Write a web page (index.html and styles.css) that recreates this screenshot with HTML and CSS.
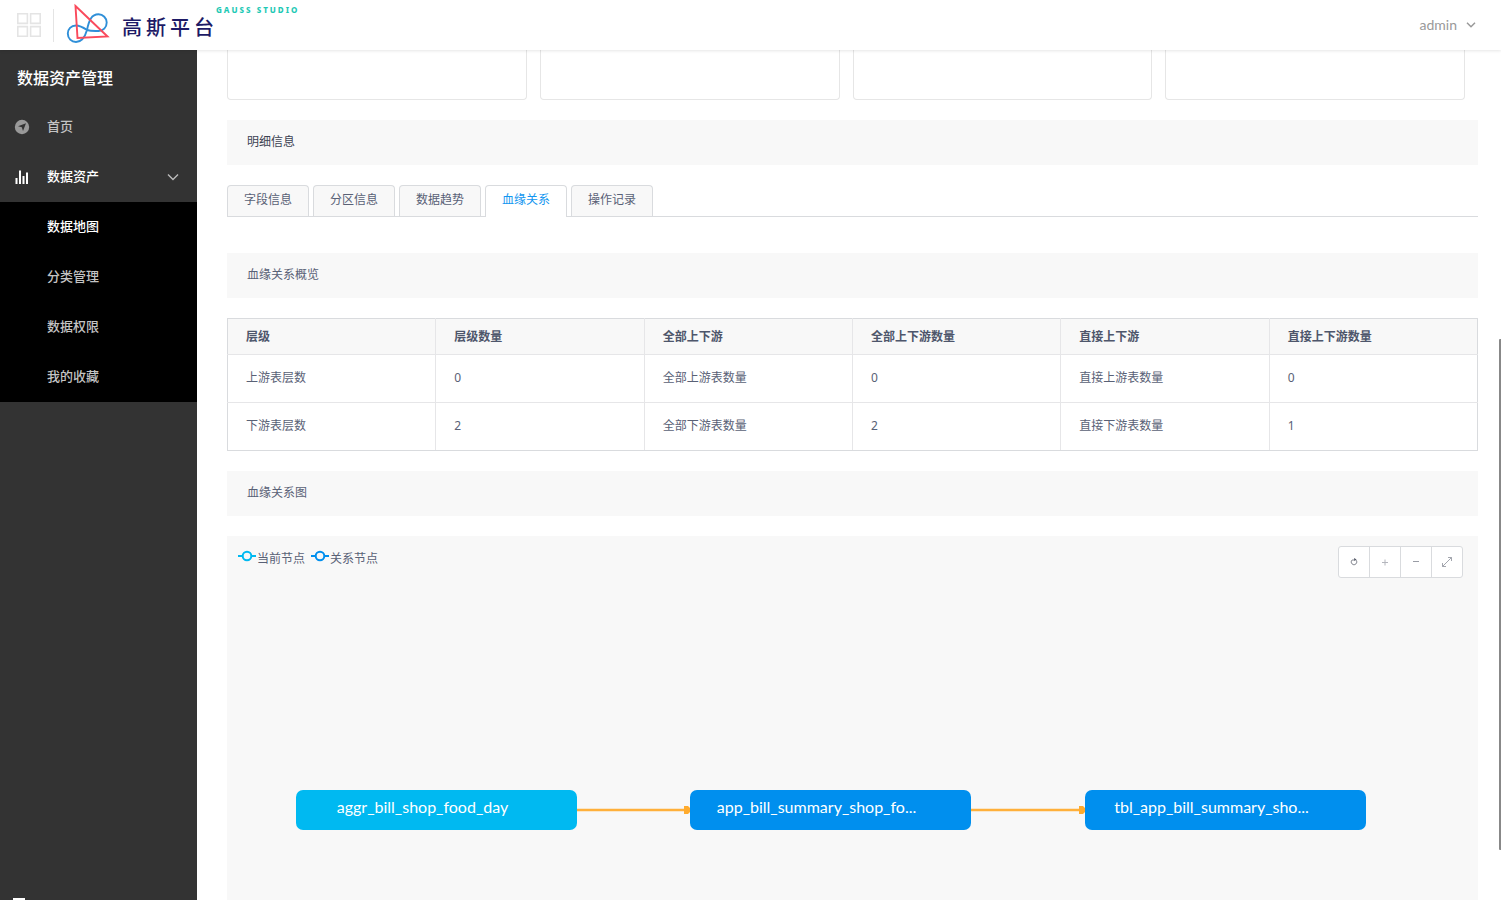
FILE: index.html
```html
<!DOCTYPE html>
<html lang="zh-CN">
<head>
<meta charset="utf-8">
<meta name="viewport" content="width=device-width, initial-scale=1">
<title>高斯平台</title>
<link rel="stylesheet" href="styles.css">
</head>
<body>
<div class="app">
  <header class="topbar">
    <button class="apps" type="button" aria-label="应用">
      <svg width="24" height="24" viewBox="0 0 24 24" fill="none" stroke="#e4e4e4" stroke-width="1.6"><path d="M.8.8h9.6v9.6H.8zM13.6.8h9.6v9.6h-9.6zM.8 13.6h9.6v9.6H.8zM13.6 13.6h9.6v9.6h-9.6z"/></svg>
    </button>
    <a class="brand" href="#">
      <svg class="brand-mark" width="44" height="42" viewBox="66 3 44 42" fill="none" stroke-width="1.9">
        <path d="M87 30C84 28 80 25.500 76 25.500C71 25.500 67.800 29 67.800 33.500C67.800 38.500 71.500 42 76 42C81.500 42 85 37 87 30C89 20 91.500 14.300 98.500 14.300C103 14.300 106.700 18 106.700 22.500C106.700 27.500 103 31 98.500 31C94 31 91 31.300 87 30z" stroke="#2f8fd8"/>
        <path d="M75.500 6L107.500 36.500L77.500 38z" stroke="#fa4a5c"/>
      </svg>
      <span class="brand-name">高斯平台</span>
      <span class="brand-sub">GAUSS STUDIO</span>
    </a>
    <button class="user" type="button">admin
      <svg width="10" height="6" viewBox="0 0 10 6" fill="none" stroke="#999" stroke-width="1.5"><path d="M1 .8l4 4 4-4"/></svg>
    </button>
  </header>
  <div class="body">
    <nav class="sidebar">
      <h1 class="side-title">数据资产管理</h1>
      <a class="side-item" href="#">
        <svg class="side-icon" width="16" height="16" viewBox="0 0 16 16"><circle cx="8" cy="8" r="7.200" fill="#999"/><path d="M12 4.200L9 12l-1.200-3.800L4 7.300z" fill="#333"/></svg>
        <span class="label">首页</span>
      </a>
      <a class="side-item open" href="#">
        <svg class="side-icon" width="16" height="16" viewBox="0 0 16 16" fill="#fff"><path d="M1.500 9h2v6h-2zM5 1.500h2V15H5zM8.500 7h2v8h-2zM12 3.500h2V15h-2z"/></svg>
        <span class="label">数据资产</span>
        <svg class="side-arrow" width="12" height="8" viewBox="0 0 12 8" fill="none" stroke="#bbb" stroke-width="1.400"><path d="M1 1.500l5 5 5-5"/></svg>
      </a>
      <div class="submenu">
        <a class="sub-item active" href="#">数据地图</a>
        <a class="sub-item" href="#">分类管理</a>
        <a class="sub-item" href="#">数据权限</a>
        <a class="sub-item" href="#">我的收藏</a>
      </div>
      <button class="collapse" type="button" aria-label="收起菜单"></button>
    </nav>
    <main class="content">
      <div class="cards"><div class="card"></div><div class="card"></div><div class="card"></div><div class="card"></div></div>
      <h2 class="bar dark">明细信息</h2>
      <div class="tabs" role="tablist">
        <button class="tab" role="tab" type="button">字段信息</button>
        <button class="tab" role="tab" type="button">分区信息</button>
        <button class="tab" role="tab" type="button">数据趋势</button>
        <button class="tab current" role="tab" type="button" aria-selected="true">血缘关系</button>
        <button class="tab" role="tab" type="button">操作记录</button>
      </div>
      <h3 class="bar">血缘关系概览</h3>
      <table class="summary">
        <thead><tr><th>层级</th><th>层级数量</th><th>全部上下游</th><th>全部上下游数量</th><th>直接上下游</th><th>直接上下游数量</th></tr></thead>
        <tbody>
          <tr><td>上游表层数</td><td>0</td><td>全部上游表数量</td><td>0</td><td>直接上游表数量</td><td>0</td></tr>
          <tr><td>下游表层数</td><td>2</td><td>全部下游表数量</td><td>2</td><td>直接下游表数量</td><td>1</td></tr>
        </tbody>
      </table>
      <h3 class="bar">血缘关系图</h3>
      <section class="graph">
        <div class="graph-head">
          <div class="legend">
            <span class="key"><svg width="18" height="12" viewBox="0 0 18 12" fill="none" stroke="#00b9f1" stroke-width="2"><path d="M0 6h4.500M13.500 6H18"/><circle cx="9" cy="6" r="4.300"/></svg>当前节点</span>
            <span class="key"><svg width="18" height="12" viewBox="0 0 18 12" fill="none" stroke="#008fee" stroke-width="2"><path d="M0 6h4.500M13.500 6H18"/><circle cx="9" cy="6" r="4.300"/></svg>关系节点</span>
          </div>
          <div class="tools">
            <button class="tool" type="button" aria-label="刷新"><svg width="12" height="12" viewBox="0 0 12 12" fill="none" stroke="#888b94"><path d="M4 4a2.800 2.800 0 1 0 4 0M4 4h2.500"/><path d="M6 2l2.600 1.600L6.300 5z" fill="#555a68" stroke="none"/></svg></button>
            <button class="tool" type="button" aria-label="放大"><svg width="12" height="12" viewBox="0 0 12 12" fill="none" stroke="#b4b6bd"><path d="M3 6.500h6M6 3.500v6"/></svg></button>
            <button class="tool" type="button" aria-label="缩小"><svg width="12" height="12" viewBox="0 0 12 12" fill="none" stroke="#999ca5"><path d="M3 5.500h6"/></svg></button>
            <button class="tool" type="button" aria-label="全屏"><svg width="12" height="12" viewBox="0 0 12 12" fill="none" stroke="#999ca5" stroke-width=".9"><path d="M1.500 10.500l9-9M7 1.500h3.500V5M1.500 7v3.500H5"/></svg></button>
          </div>
        </div>
        <svg class="edges" width="800" height="10" viewBox="0 0 800 10"><path d="M0 5h112M394 5h112" stroke="#ffb03b" stroke-width="2.500"/><path d="M107 1h4l4 4-4 4h-4zM502 1h4l4 4-4 4h-4z" fill="#ffab2e"/></svg>
        <div class="node node-a">aggr_bill_shop_food_day</div>
        <div class="node node-b">app_bill_summary_shop_fo...</div>
        <div class="node node-c">tbl_app_bill_summary_sho...</div>
      </section>
      <div class="scroll-thumb"></div>
    </main>
  </div>
</div>
</body>
</html>
```
FILE: styles.css
```css
* { box-sizing: border-box; }
body {
  margin: 0;
  font-family: "Noto Sans", "Noto Sans CJK SC", sans-serif;
  font-size: 12px;
  line-height: 18px;
  color: #596176;
}
button { font: inherit; color: inherit; background: none; border: 0; padding: 0; cursor: pointer; }
a { color: inherit; text-decoration: none; }
svg { flex: none; }
.app { display: flex; flex-direction: column; height: 100vh; overflow: hidden; }

.topbar {
  display: flex;
  align-items: center;
  flex: none;
  height: 50px;
  padding: 0 25px 0 17px;
  background: #fff;
  box-shadow: 0 1px 3px rgba(0, 0, 0, .1);
  z-index: 1;
}
.apps { display: flex; height: 33px; align-items: center; padding-right: 12px; border-right: 1px solid #e4e4e4; }
.brand { display: flex; align-self: stretch; padding-left: 12px; }
.brand-mark { margin-top: 3px; }
.brand-name {
  margin: 12px 0 0 12px;
  font-family: "Noto Sans CJK SC", sans-serif;
  font-size: 20px;
  line-height: 30px;
  font-weight: 500;
  letter-spacing: 4px;
  color: #1d1a66;
}
.brand-sub { margin-left: -2px; padding-top: 4px; font-family: "Noto Sans", sans-serif; font-size: 8px; line-height: 12px; font-weight: 800; letter-spacing: 2px; color: #1fc9b5; }
.user { display: flex; align-items: center; gap: 9px; margin-left: auto; padding-bottom: 1px; font-family: Lato, sans-serif; font-size: 14px; color: #999; }

.body { display: flex; flex: 1; min-height: 0; }
.sidebar { position: relative; flex: none; width: 197px; background: #333; color: #c4c4c4; font-size: 13px; font-weight: 500; }
.side-title { margin: 0; padding: 16px 17px 12px; font-size: 16px; line-height: 24px; font-weight: 500; color: #fff; }
.side-item { display: flex; align-items: center; height: 50px; padding: 0 18px 0 14px; }
.side-icon { margin-right: 17px; }
.label { padding-bottom: 2px; }
.open, .active { color: #fff; }
.side-arrow { margin-left: auto; }
.submenu { background: #000; }
.sub-item { display: flex; align-items: center; height: 50px; padding: 0 0 2px 47px; }
.collapse { position: absolute; left: 13px; bottom: 0; width: 12px; height: 2px; background: #fff; }

.content { position: relative; flex: 1; min-width: 0; padding: 0 23px 0 30px; overflow: hidden; display: flex; flex-direction: column; }
.cards { display: grid; grid-template-columns: repeat(4, 1fr); gap: 13px; padding-right: 13px; margin-bottom: 20px; }
.card { height: 50px; border: 1px solid #e6e6e6; border-top: 0; border-radius: 0 0 4px 4px; }
.bar { margin: 0 0 20px; padding: 13px 20px 14px; background: #f8f8f8; font-size: 12px; line-height: 18px; font-weight: 400; }
.dark { color: #3c4353; }
.tabs { display: flex; gap: 4px; margin-bottom: 36px; border-bottom: 1px solid #d9dbde; }
.tab { height: 31px; padding: 0 16px 2px; border: 1px solid #d9dbde; border-bottom: 0; border-radius: 4px 4px 0 0; background: #f8f8f8; }
.current { height: 32px; margin-bottom: -1px; padding-bottom: 3px; background: #fff; color: #1296f0; }

.summary { width: 100%; margin-bottom: 20px; table-layout: fixed; border-collapse: collapse; border: 1px solid #d9dbde; }
.summary th, .summary td { padding: 0 18px; border: 1px solid #e6e6e8; text-align: left; }
.summary th { height: 36px; background: #f8f8f8; font-weight: 700; color: #4e566b; }
.summary td { height: 48px; padding-bottom: 2px; }
.summary thead th { border-top-color: #d9dbde; }
.summary tbody tr:last-child td { border-bottom-color: #d9dbde; }
.summary tr > :first-child { border-left-color: #d9dbde; }
.summary tr > :last-child { border-right-color: #d9dbde; }

.graph { position: relative; flex: 1; padding: 10px 15px 0 11px; background: #f8f8f8; }
.graph-head { display: flex; justify-content: space-between; align-items: flex-start; }
.legend { display: flex; gap: 6px; padding-top: 4px; }
.key { display: flex; gap: 1px; }
.tools { display: flex; border: 1px solid #d9dbde; border-radius: 3px; background: #fff; }
.tool { display: flex; align-items: center; justify-content: center; width: 31px; height: 30px; }
.tool:first-child { width: 30px; }
.tool + .tool { border-left: 1px solid #d9dbde; }
.node {
  position: absolute;
  top: 254px;
  width: 281px;
  height: 40px;
  padding: 0 28px 4px 0;
  border-radius: 7px;
  background: #008fee;
  font-family: Lato, sans-serif;
  font-size: 16px;
  line-height: 34px;
  text-align: center;
  white-space: nowrap;
  color: #fff;
}
.node-a { left: 69px; background: #00b9f1; }
.node-b { left: 463px; }
.node-c { left: 858px; }
.edges { position: absolute; left: 350px; top: 269px; }
.scroll-thumb { position: absolute; right: 0; top: 289px; width: 2px; height: 511px; border-radius: 1px 0 0 1px; background: #888; }
```
